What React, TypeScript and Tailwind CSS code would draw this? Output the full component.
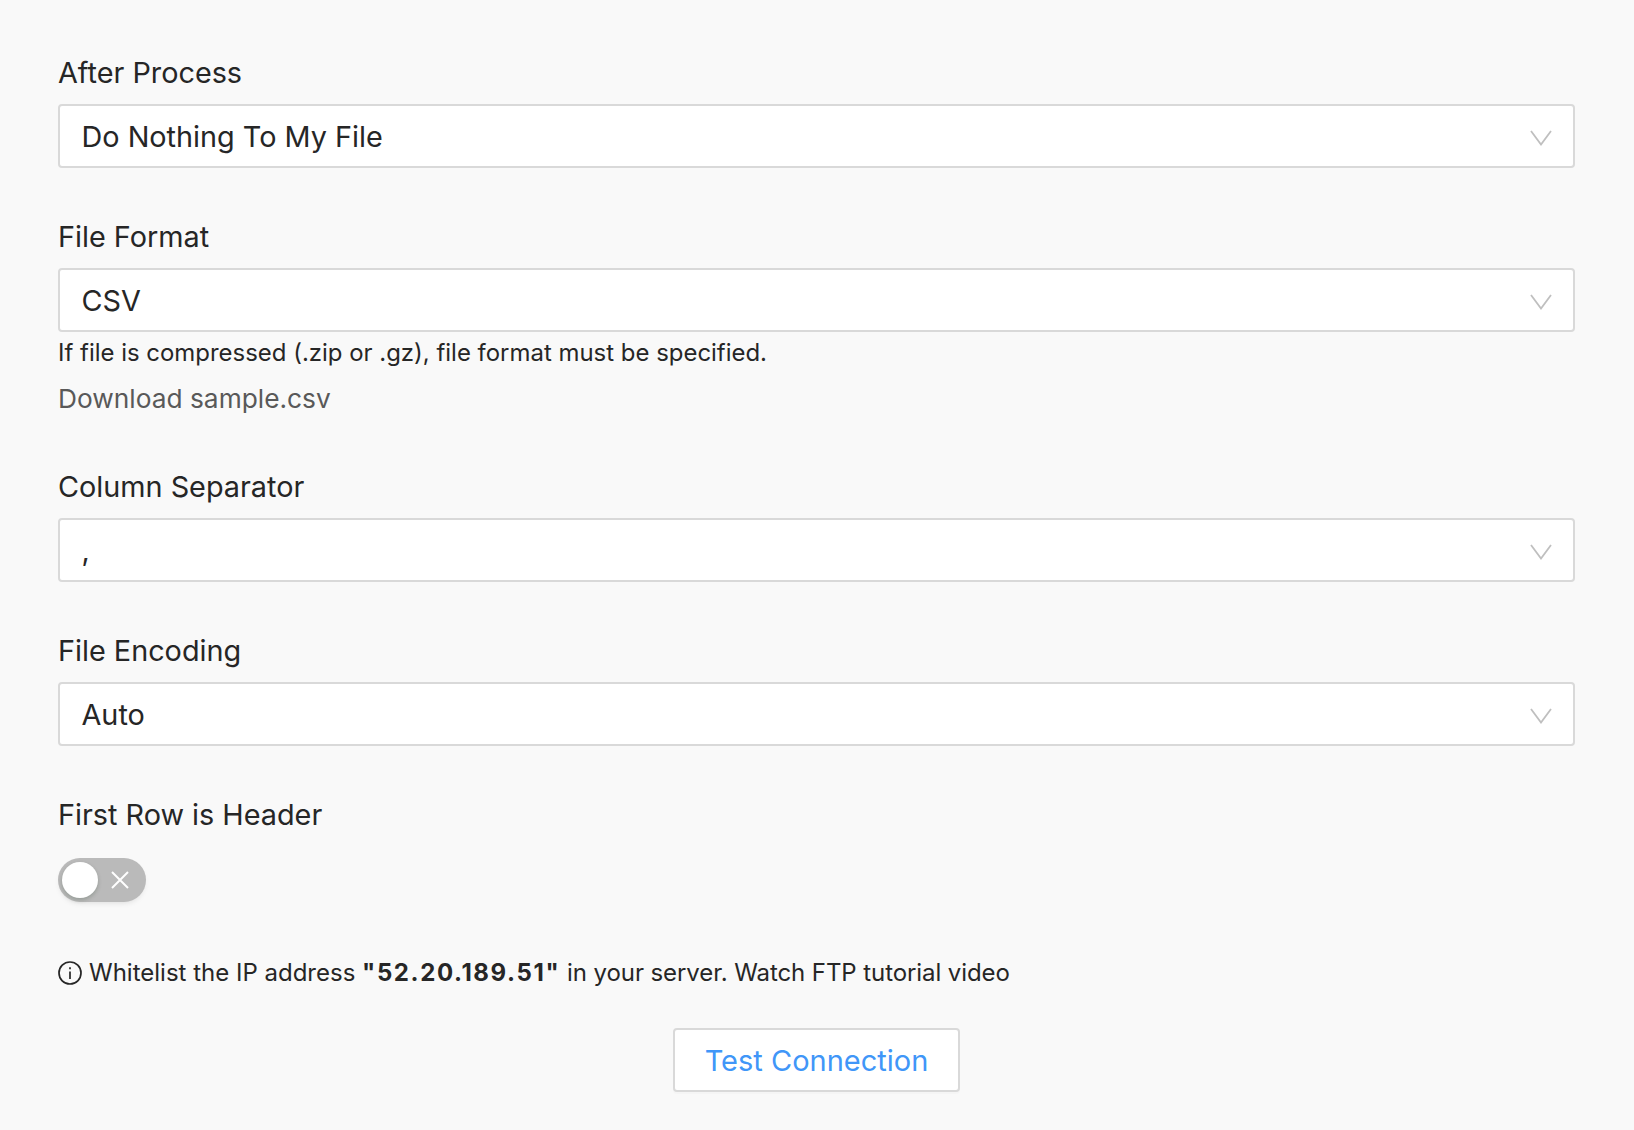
import React from "react";

const font = "font-['Inter','Noto_Sans',sans-serif]";

function Chevron() {
  return (
    <svg width="22" height="16" viewBox="0 0 22 16" fill="none" className="absolute right-[21px] top-[24px]">
      <path d="M1 1 L11 14.5 L21 1" stroke="#bfbfbf" strokeWidth="1.8" />
    </svg>
  );
}

function Select({ value }: { value: string }) {
  return (
    <div className="relative flex h-[64px] w-full items-center rounded-[4px] border-2 border-[#d9d9d9] bg-white pl-[21.5px] text-[28.8px] text-[#262626]">
      <span className="pt-[2px]">{value}</span>
      <Chevron />
    </div>
  );
}

function Label({ children }: { children: React.ReactNode }) {
  return <div className="h-[49px] text-[28.8px] leading-[36px] text-[#262626]">{children}</div>;
}

export default function App() {
  return (
    <div className={`${font} min-h-[1130px] w-[1634px] bg-[#f9f9f9] pl-[58px] pr-[59px] pt-[55px] text-[#262626]`}>
      <Label>After Process</Label>
      <Select value="Do Nothing To My File" />
      <div className="mt-[51px]">
        <Label>File Format</Label>
        <Select value="CSV" />
      </div>
      <div className="mt-[5px] text-[23.95px] leading-[32px]">If file is compressed (.zip or .gz), file format must be specified.</div>
      <div className="mt-[12px] text-[26.3px] leading-[36px] text-[#595959]">Download sample.csv</div>
      <div className="mt-[52px]">
        <Label>Column Separator</Label>
        <Select value="," />
      </div>
      <div className="mt-[51px]">
        <Label>File Encoding</Label>
        <Select value="Auto" />
      </div>
      <div className="mt-[51px]">
        <Label>First Row is Header</Label>
      </div>
      <div className="relative mt-[12px] h-[44px] w-[88px] rounded-full bg-[#bababa] shadow-[0_3px_6px_-3px_rgba(0,0,0,0.15)]">
        <div className="absolute left-[4px] top-[4px] h-[36px] w-[36px] rounded-full bg-white shadow-[0_2px_4px_rgba(0,35,11,0.2)]" />
        <svg width="18" height="18" viewBox="0 0 18 18" fill="none" className="absolute left-[53px] top-[13px]">
          <path d="M1 1 L17 17 M17 1 L1 17" stroke="#fff" strokeWidth="2" />
        </svg>
      </div>
      <div className="mt-[53px] flex items-center text-[24px] leading-[36px]">
        <svg width="24" height="24" viewBox="0 0 24 24" fill="none" className="mr-[7px] shrink-0">
          <circle cx="12" cy="12" r="11" stroke="#262626" strokeWidth="1.7" />
          <path d="M12 10.5 V18 M12 6.2 V8.2" stroke="#262626" strokeWidth="1.7" />
        </svg>
        <span className="whitespace-pre">
          Whitelist the IP address <b className="font-bold tracking-[1.6px]">"52.20.189.51"</b> <span className="tracking-[-0.08px]">in your server. Watch FTP tutorial video</span>
        </span>
      </div>
      <div className="mt-[37px] flex justify-center">
        <button className="h-[64px] w-[287px] rounded-[4px] border-2 border-[#d9d9d9] bg-white pt-[2px] text-[29px] text-[#4096f8] shadow-[0_2px_0_rgba(0,0,0,0.015)]">
          Test Connection
        </button>
      </div>
    </div>
  );
}
